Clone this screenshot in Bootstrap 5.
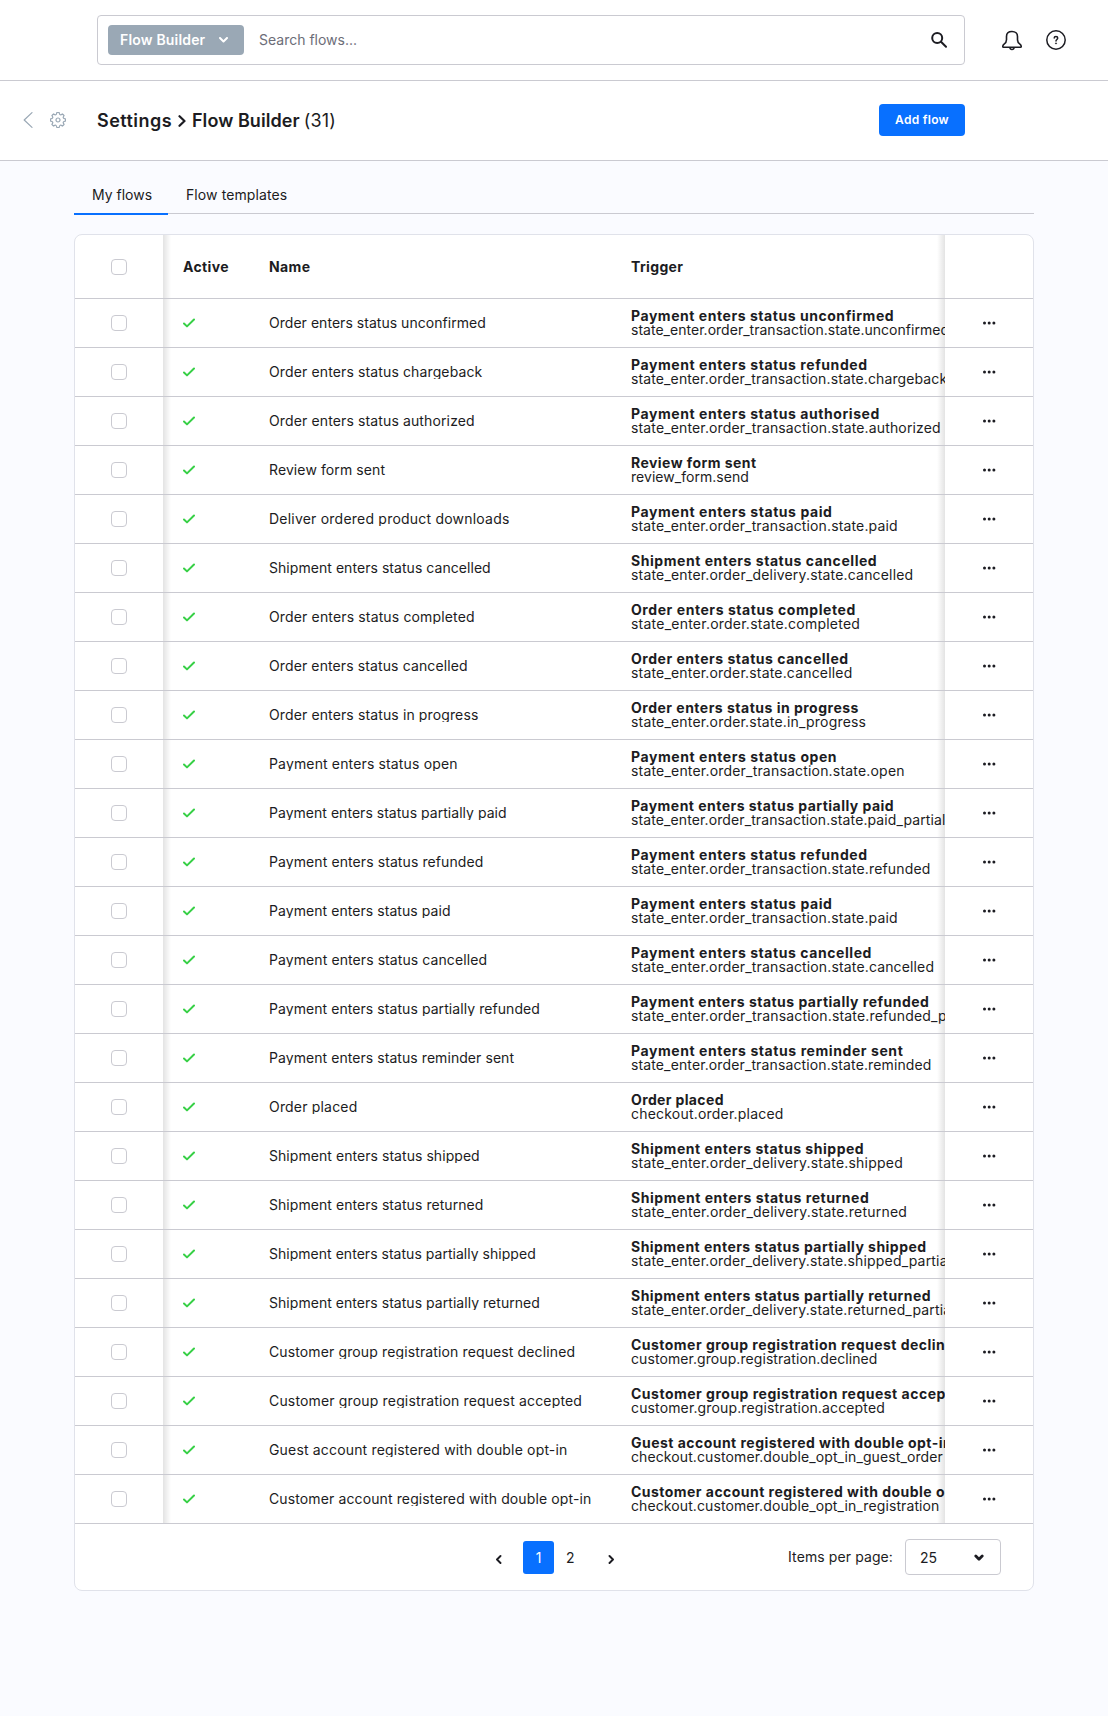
<!DOCTYPE html>
<html lang="en">
<head>
<meta charset="utf-8">
<title>Flow Builder</title>
<link href="https://cdn.jsdelivr.net/npm/bootstrap@5.3.0/dist/css/bootstrap.min.css" rel="stylesheet">
<style>
:root{--line:#cacad1;--ink:#1c1c22;--brand:#0870ff}
body{font-family:Inter,sans-serif;font-size:14px;line-height:20px;color:var(--ink);background:#fafbff;min-height:1716px}
svg{display:block;flex:none}
.topbar,.pagehead{height:81px;border-bottom:1px solid var(--line)}
.pagehead{height:80px;padding-bottom:1px}
.searchbox{width:868px;height:50px;margin-left:97px;border:1px solid var(--line);border-radius:4px;padding:0 17px 0 10px}
.scope-btn{width:136px;height:30px;background:#9aa8b5;color:#fff;font-weight:600;border-radius:4px;padding:0 16px 0 12px;border:0;font-size:14px;letter-spacing:.18px;white-space:nowrap;flex:none}
.searchbox input{font-size:14px;line-height:20px;padding:0;margin-left:15px;color:var(--ink)}
.searchbox input::placeholder{color:#6c6d78;opacity:1}
.page-title{font-size:18px;font-weight:600;line-height:24px;margin-left:31px;padding-top:1px}
.page-title .root{letter-spacing:.45px}
.page-title .leaf{letter-spacing:.06px}
.page-title .total{font-weight:400;letter-spacing:.2px}
.add-btn{width:86px;height:32px;background:var(--brand);color:#fff;font-size:12px;font-weight:600;letter-spacing:.28px;border-radius:4px;padding:0;margin-right:143px}
.help{margin:0 42px 0 24px}
.wrap{width:960px;margin-left:74px}
.flow-tabs{height:53px;border-bottom:1px solid var(--line)}
.flow-tabs a{height:54px;padding:24px 18px 0;color:var(--ink);text-decoration:none;border-bottom:2px solid transparent;display:block;white-space:nowrap;letter-spacing:.1px}
.flow-tabs a.active{border-color:var(--brand);width:94px;padding-right:0;letter-spacing:0}
.panel{margin-top:20px;background:#fff;border:1px solid #e0e2ea;border-radius:8px;overflow:hidden}
.grid{table-layout:fixed;width:958px;border-collapse:separate;border-spacing:0;line-height:14px;color:var(--ink)}
.grid th,.grid td{height:49px;padding:0 0 0 20px;border-bottom:1px solid var(--line);vertical-align:middle;white-space:nowrap;overflow:hidden}
.grid th{height:64px;font-weight:700;line-height:20px;letter-spacing:.35px}
.grid .pick,.grid .acts{padding:0;position:relative;overflow:visible}
.pick::after,.acts::before{content:"";position:absolute;top:0;bottom:0;width:8px;left:100%;background:linear-gradient(to right,rgba(0,0,0,.11),rgba(0,0,0,0))}
.acts::before{left:auto;right:100%;background:linear-gradient(to left,rgba(0,0,0,.11),rgba(0,0,0,0))}
.grid .form-check-input{width:16px;height:16px;margin:0 auto;display:block;float:none;border:1px solid var(--line);border-radius:4px}
.clip{overflow:hidden;line-height:14px;height:14px}
.trig strong,.trig span{display:block;font-weight:700}
.trig span{font-weight:400}
.pager{height:66px;padding:0 32px 0 420px}
.pager a{height:33px;color:var(--ink);text-decoration:none;border-radius:3px;margin-top:1px}
.pager a.cur{width:31px;background:var(--brand);color:#fff}
.pager .step{padding-top:2px}
.items{margin-right:12px;letter-spacing:.1px}
.perpage{width:96px;height:36px;border:1px solid var(--line);border-radius:4px;padding:1px 16px 0 14px}
</style>
</head>
<body>
<header class="topbar bg-white d-flex align-items-center">
  <div class="searchbox d-flex align-items-center">
    <button class="scope-btn d-flex align-items-center justify-content-between" type="button">Flow Builder
      <svg width="9" height="6" viewBox="0 0 9 6" fill="none" stroke="#fff" stroke-width="2" stroke-linecap="round" stroke-linejoin="round"><path d="M1 1l3.5 3.5L8 1"/></svg>
    </button>
    <input class="form-control border-0 bg-transparent flex-grow-1" placeholder="Search flows...">
    <svg width="16" height="16" viewBox="0 0 16 16" fill="none" stroke="#1c1c22" stroke-width="2" stroke-linecap="round"><circle cx="6.200" cy="6" r="5"/><path d="M10 9.800l5 4.900"/></svg>
  </div>
  <svg class="ms-auto" width="20" height="21" viewBox="0 0 20 21" fill="none" stroke="#1c1c22" stroke-width="1.600" stroke-linejoin="round"><path d="M10 1.500C6.600 1.500 4.500 3.500 4.500 6.500V9.800c0 2-.7 3.100-2.400 4.300C.7 15.100.2 17.300 1.400 17.300h17.200c1.200 0 .7-2.200-.7-3.200-1.700-1.200-2.400-2.300-2.400-4.300V6.500c0-3-2.100-5-5.500-5z"/><path d="M7.900 17.500c.3 2.700 3.900 2.700 4.200 0"/></svg>
  <svg class="help" width="20" height="20" viewBox="0 0 20 20" fill="none" stroke="#1c1c22" stroke-width="1.500"><circle cx="10" cy="10" r="9.200"/><path d="M8.200 8.100c0-2.100 3.500-2.100 3.500 0 0 1.400-1.700 1.400-1.700 2.900" stroke-linecap="round"/><circle cx="10" cy="13.400" r=".6" fill="#1c1c22" stroke-width=".6"/></svg>
</header>
<div class="pagehead bg-white d-flex align-items-center">
  <svg style="margin-left:23px" width="10" height="16" viewBox="0 0 10 16" fill="none" stroke="#9aa8b5" stroke-width="1.200" stroke-linecap="round" stroke-linejoin="round"><path d="M9 .6L1.200 8 9 15.400"/></svg>
  <svg style="margin-left:17px" width="16" height="16" viewBox="-8 -8 16 16" fill="none" stroke="#9aa8b5" stroke-width="1.200" stroke-linejoin="round"><path d="M7.400-1.200A7.500 7.500 0 0 1 7.400 1.200Q3.800 1.600 6.080 4.380A7.500 7.500 0 0 1 4.380 6.080Q1.600 3.800 1.200 7.400A7.500 7.500 0 0 1-1.200 7.400Q-1.600 3.800-4.380 6.080A7.500 7.500 0 0 1-6.080 4.380Q-3.800 1.600-7.400 1.200A7.500 7.500 0 0 1-7.400-1.200Q-3.800-1.600-6.080-4.380A7.500 7.500 0 0 1-4.380-6.080Q-1.600-3.800-1.200-7.400A7.500 7.500 0 0 1 1.200-7.400Q1.600-3.800 4.380-6.080A7.500 7.500 0 0 1 6.080-4.380Q3.800-1.600 7.400-1.200z"/><circle r="2"/></svg>
  <h1 class="page-title mb-0 d-flex align-items-center"><span class="root">Settings</span><svg style="margin:0 6px 0 6px" width="8" height="12" viewBox="0 0 8 12" fill="none" stroke="#1c1c22" stroke-width="2.200" stroke-linecap="round" stroke-linejoin="round"><path d="M1.500 1.200L6.500 6l-5 4.800"/></svg><span class="leaf">Flow Builder</span><span class="total ms-1">(31)</span></h1>
  <button class="btn add-btn ms-auto" type="button">Add flow</button>
</div>
<main class="wrap">
  <nav class="flow-tabs d-flex"><a class="active" href="#">My flows</a><a href="#">Flow templates</a></nav>
  <section class="panel">
    <table class="grid">
      <colgroup><col style="width:88px"><col style="width:86px"><col style="width:362px"><col style="width:334px"><col style="width:88px"></colgroup>
      <thead><tr><th class="pick"><input class="form-check-input" type="checkbox" aria-label="Select all"></th><th>Active</th><th>Name</th><th>Trigger</th><th class="acts"></th></tr></thead>
      <tbody id="flows"></tbody>
    </table>
    <footer class="pager d-flex align-items-center">
      <a href="#" class="step d-flex align-items-center" aria-label="Previous"><svg width="8" height="10" viewBox="0 0 8 10" fill="none" stroke="#1c1c22" stroke-width="1.900" stroke-linecap="round" stroke-linejoin="round"><path d="M5.500 2L2 5.500 5.500 9"/></svg></a>
      <a href="#" class="cur d-flex align-items-center justify-content-center" style="margin-left:20px">1</a>
      <a href="#" class="d-flex align-items-center" style="margin-left:12px">2</a>
      <a href="#" class="step d-flex align-items-center" style="margin-left:32px" aria-label="Next"><svg width="8" height="10" viewBox="0 0 8 10" fill="none" stroke="#1c1c22" stroke-width="1.900" stroke-linecap="round" stroke-linejoin="round"><path d="M2.500 2L6 5.500 2.500 9"/></svg></a>
      <span class="items ms-auto">Items per page:</span>
      <div class="perpage d-flex align-items-center justify-content-between">25<svg width="10" height="8" viewBox="0 0 10 8" fill="none" stroke="#1c1c22" stroke-width="2.800" stroke-linecap="round" stroke-linejoin="round"><path d="M1.800 2L5 5.200 8.200 2"/></svg></div>
    </footer>
  </section>
</main>
<script>
const T="state_enter.order_transaction.state.",D="state_enter.order_delivery.state.",O="state_enter.order.state.";
// name, trigger, technical key, then the extra tracking of each of the three texts
const flows=[
["Order enters status unconfirmed","Payment enters status unconfirmed",T+"unconfirmed",1,16.5,1],
["Order enters status chargeback","Payment enters status refunded",T+"chargeback",3.5,15.5,5],
["Order enters status authorized","Payment enters status authorised",T+"authorized",3.5,16.5,6],
["Review form sent","Review form sent","review_form.send",1.5,6.5,.5],
["Deliver ordered product downloads","Payment enters status paid",T+"paid",6.5,13.5,5],
["Shipment enters status cancelled","Shipment enters status cancelled",D+"cancelled",1.5,16,7],
["Order enters status completed","Order enters status completed",O+"completed",4,15,7],
["Order enters status cancelled","Order enters status cancelled",O+"cancelled",3,14,5.5],
["Order enters status in progress","Order enters status in progress",O+"in_progress",3.5,14,6],
["Payment enters status open","Payment enters status open",T+"open",3.5,13.5,7],
["Payment enters status partially paid","Payment enters status partially paid",T+"paid_partially",1,15.5,5],
["Payment enters status refunded","Payment enters status refunded",T+"refunded",2.5,15.5,6],
["Payment enters status paid","Payment enters status paid",T+"paid",1.5,13.5,5],
["Payment enters status cancelled","Payment enters status cancelled",T+"cancelled",2.5,16,6],
["Payment enters status partially refunded","Payment enters status partially refunded",T+"refunded_partially",2.5,17.5,8],
["Payment enters status reminder sent","Payment enters status reminder sent",T+"reminded",2,18.5,5],
["Order placed","Order placed","checkout.order.placed",2,4,4],
["Shipment enters status shipped","Shipment enters status shipped",D+"shipped",1.5,14.5,7.5],
["Shipment enters status returned","Shipment enters status returned",D+"returned",1.5,15.5,8],
["Shipment enters status partially shipped","Shipment enters status partially shipped",D+"shipped_partially",1,17,8],
["Shipment enters status partially returned","Shipment enters status partially returned",D+"returned_partially",1.5,17.5,8],
["Customer group registration request declined","Customer group registration request declined","customer.group.registration.declined",5,19,2.5],
["Customer group registration request accepted","Customer group registration request accepted","customer.group.registration.accepted",6.5,20,4.5],
["Guest account registered with double opt-in","Guest account registered with double opt-in","checkout.customer.double_opt_in_guest_order",6.5,18.5,4],
["Customer account registered with double opt-in","Customer account registered with double opt-in","checkout.customer.double_opt_in_registration",5,19.5,4]];
const ls=(s,d)=>`style="letter-spacing:${(d*1.095/s.length).toFixed(3)}px"`;
document.getElementById("flows").innerHTML=flows.map(([n,t,k,a,b,c])=>`<tr><td class="pick"><input class="form-check-input" type="checkbox" aria-label="${n}"></td>
<td><svg width="12" height="10" viewBox="0 0 12 10" fill="none" stroke="#37d046" stroke-width="2" stroke-linecap="round" stroke-linejoin="round"><path d="M1 5.500L4 8.400 11 1.500"/></svg></td>
<td><div class="clip" ${ls(n,a)}>${n}</div></td><td class="trig"><strong ${ls(t,b)}>${t}</strong><span ${ls(k,c)}>${k}</span></td>
<td class="acts"><svg class="mx-auto" width="14" height="4" viewBox="0 0 14 4" fill="#1c1c22"><circle cx="2.500" cy="2" r="1.500"/><circle cx="7.200" cy="2" r="1.500"/><circle cx="11.900" cy="2" r="1.500"/></svg></td></tr>`).join("");
</script>
<script src="https://cdn.jsdelivr.net/npm/bootstrap@5.3.0/dist/js/bootstrap.bundle.min.js"></script>
</body>
</html>
